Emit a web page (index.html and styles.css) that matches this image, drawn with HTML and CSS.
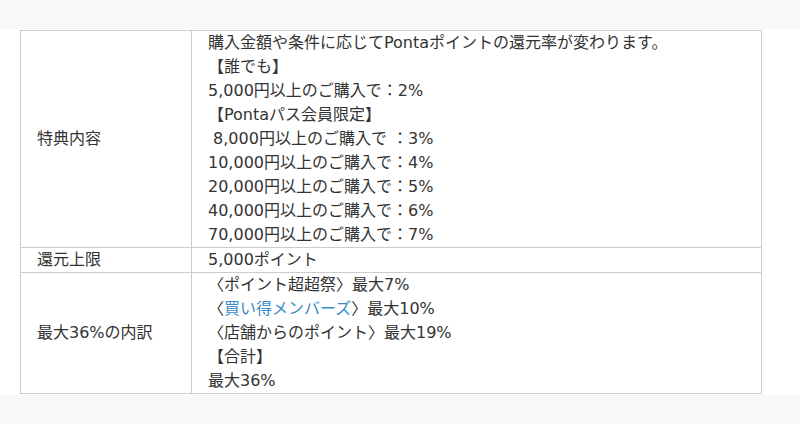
FILE: index.html
```html
<!DOCTYPE html>
<html lang="ja">
<head>
<meta charset="utf-8">
<link rel="stylesheet" href="styles.css">
</head>
<body>
<div class="band">
  <table class="spec">
    <colgroup><col class="c1"><col class="c2"></colgroup>
    <tbody>
      <tr>
        <th>特典内容</th>
        <td>購入金額や条件に応じてPontaポイントの還元率が変わります。<br>【誰でも】<br>5,000円以上のご購入で：2%<br>【Pontaパス会員限定】<br>&nbsp;8,000円以上のご購入で&nbsp;：3%<br>10,000円以上のご購入で：4%<br>20,000円以上のご購入で：5%<br>40,000円以上のご購入で：6%<br>70,000円以上のご購入で：7%</td>
      </tr>
      <tr>
        <th>還元上限</th>
        <td>5,000ポイント</td>
      </tr>
      <tr>
        <th>最大36%の内訳</th>
        <td>〈ポイント超超祭〉最大7%<br>〈<a class="link" href="#">買い得メンバーズ</a>〉最大10%<br>〈店舗からのポイント〉最大19%<br>【合計】<br>最大36%</td>
      </tr>
    </tbody>
  </table>
</div>
</body>
</html>
```
FILE: styles.css
```css
html, body {
  margin: 0;
  padding: 0;
  background: #f8f8f8;
}
body {
  font-family: "DejaVu Sans", "Noto Sans CJK JP", sans-serif;
  font-size: 16px;
  color: #333;
}
.band {
  margin-top: 29px;
  background: #fff;
  padding: 1px 0 1px 20px;
}
.spec {
  border-collapse: collapse;
  table-layout: fixed;
  width: 742px;
}
.c1 { width: 171px; }
.spec th, .spec td {
  border: 1px solid #ccc;
  padding: 0 16px;
  line-height: 24px;
  text-align: left;
  font-weight: normal;
  vertical-align: middle;
}
.link {
  color: #3a8cc8;
  text-decoration: none;
}
```
